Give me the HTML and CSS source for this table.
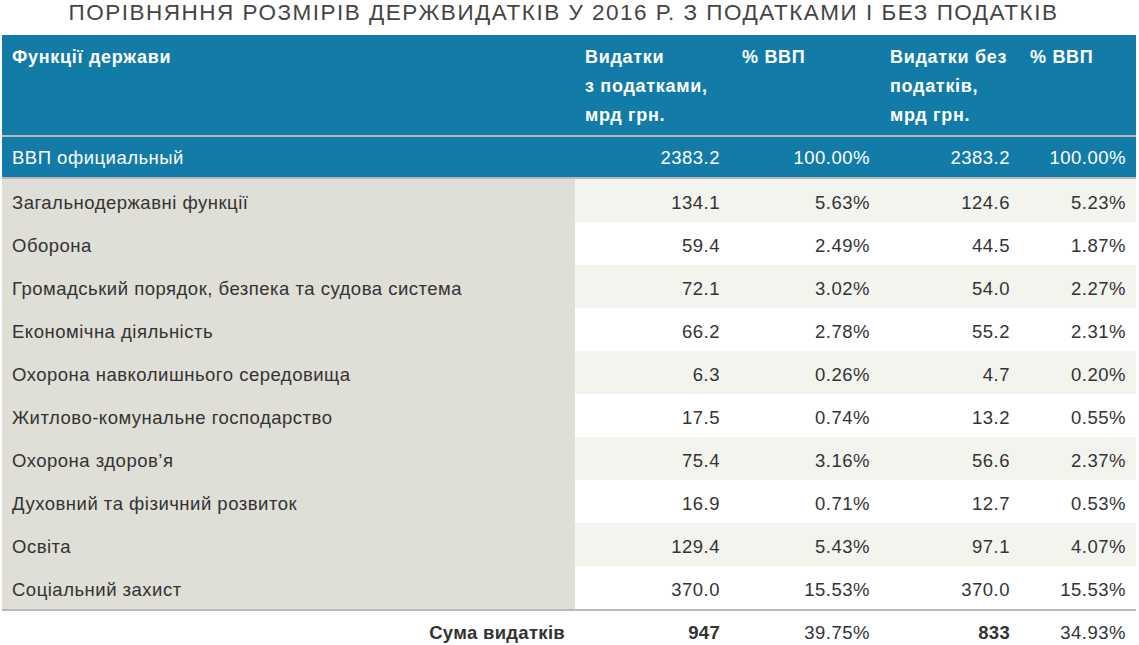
FILE: index.html
```html
<!DOCTYPE html>
<html lang="uk">
<head>
<meta charset="utf-8">
<title>Порівняння розмірів держвидатків</title>
<link rel="stylesheet" href="styles.css">
</head>
<body>
<h1 class="title">ПОРІВНЯННЯ РОЗМІРІВ ДЕРЖВИДАТКІВ У 2016 Р. З ПОДАТКАМИ І БЕЗ ПОДАТКІВ</h1>
<table class="data">
  <colgroup>
    <col class="c1"><col class="c2"><col class="c3"><col class="c4"><col class="c5">
  </colgroup>
  <thead>
    <tr class="head">
      <th>Функції держави</th>
      <th>Видатки<br>з податками,<br>мрд грн.</th>
      <th>% ВВП</th>
      <th>Видатки без<br>податків,<br>мрд грн.</th>
      <th>% ВВП</th>
    </tr>
    <tr class="gdp">
      <td class="name">ВВП официальный</td>
      <td>2383.2</td>
      <td>100.00%</td>
      <td>2383.2</td>
      <td>100.00%</td>
    </tr>
  </thead>
  <tbody>
    <tr><td class="name">Загальнодержавні функції</td><td>134.1</td><td>5.63%</td><td>124.6</td><td>5.23%</td></tr>
    <tr><td class="name">Оборона</td><td>59.4</td><td>2.49%</td><td>44.5</td><td>1.87%</td></tr>
    <tr><td class="name">Громадський порядок, безпека та судова система</td><td>72.1</td><td>3.02%</td><td>54.0</td><td>2.27%</td></tr>
    <tr><td class="name">Економічна діяльність</td><td>66.2</td><td>2.78%</td><td>55.2</td><td>2.31%</td></tr>
    <tr><td class="name">Охорона навколишнього середовища</td><td>6.3</td><td>0.26%</td><td>4.7</td><td>0.20%</td></tr>
    <tr><td class="name">Житлово-комунальне господарство</td><td>17.5</td><td>0.74%</td><td>13.2</td><td>0.55%</td></tr>
    <tr><td class="name">Охорона здоров’я</td><td>75.4</td><td>3.16%</td><td>56.6</td><td>2.37%</td></tr>
    <tr><td class="name">Духовний та фізичний розвиток</td><td>16.9</td><td>0.71%</td><td>12.7</td><td>0.53%</td></tr>
    <tr><td class="name">Освіта</td><td>129.4</td><td>5.43%</td><td>97.1</td><td>4.07%</td></tr>
    <tr><td class="name">Соціальний захист</td><td>370.0</td><td>15.53%</td><td>370.0</td><td>15.53%</td></tr>
  </tbody>
  <tfoot>
    <tr class="total">
      <td class="name"><b>Сума видатків</b></td>
      <td><b>947</b></td>
      <td>39.75%</td>
      <td><b>833</b></td>
      <td>34.93%</td>
    </tr>
  </tfoot>
</table>
</body>
</html>
```
FILE: styles.css
```css
html, body {
  margin: 0;
  padding: 0;
  background: #ffffff;
}
body {
  font-family: "Liberation Sans", Arial, sans-serif;
  color: #333333;
  width: 1139px;
  overflow: hidden;
}
.title {
  margin: 0;
  padding: 0;
  height: 35px;
  line-height: 26px;
  font-size: 22.5px;
  font-weight: normal;
  color: #444444;
  text-align: center;
  width: 1127px;
  letter-spacing: 1.5px;
}
.data {
  margin-left: 2px;
  width: 1134px;
  border-collapse: separate;
  border-spacing: 0;
  table-layout: fixed;
  font-size: 18.5px;
  letter-spacing: 0.5px;
}
.c1 { width: 573px; }
.c2 { width: 157px; }
.c3 { width: 148px; }
.c4 { width: 140px; }
.c5 { width: 116px; }

.data th,
.data td {
  padding: 0 10px;
  text-align: right;
  vertical-align: top;
  white-space: nowrap;
  line-height: 22px;
}
.data td:nth-child(2) {
  padding-right: 12px;
}
.data td.name {
  text-align: left;
}
.head th {
  background: #127ba8;
  color: #ffffff;
  font-size: 18px;
  font-weight: bold;
  letter-spacing: 0.7px;
  text-align: left;
  line-height: 29px;
  padding-top: 8px;
  padding-bottom: 5px;
  border-bottom: 2px solid #b8b8b8;
}
.gdp td {
  background: #127ba8;
  color: #ffffff;
  padding-top: 10px;
  padding-bottom: 8px;
  border-bottom: 2px solid #b8b8b8;
}
.data tbody td {
  background: #f4f4ef;
  padding-top: 13px;
  padding-bottom: 8px;
}
.data tbody tr:nth-child(even) td {
  background: #ffffff;
}
.data tbody td.name,
.data tbody tr:nth-child(even) td.name {
  background: #dfded7;
}
.data tbody tr:last-child td {
  border-bottom: 2px solid #b8b8b8;
}
.total td {
  background: #ffffff;
  padding-top: 11px;
  padding-bottom: 12px;
}
.total td.name {
  text-align: right;
}
.total b {
  font-weight: bold;
  letter-spacing: 0.3px;
}
```
